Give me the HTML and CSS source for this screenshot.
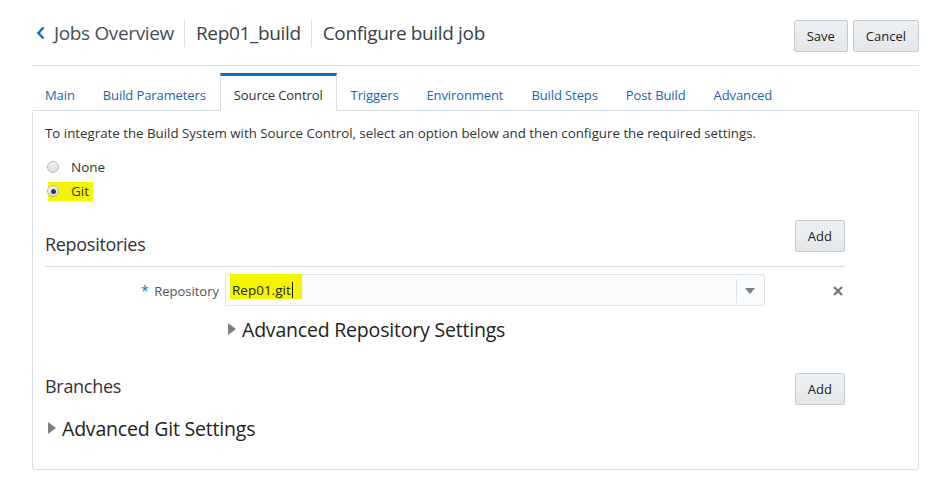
FILE: index.html
```html
<!DOCTYPE html>
<html lang="en">
<head>
<meta charset="utf-8">
<title>Configure build job</title>
<link rel="stylesheet" href="styles.css">
</head>
<body>
<div class="page">
  <header class="header">
    <nav class="crumbs">
      <a class="crumb back" href="#">
        <svg class="chev" width="10" height="14" viewBox="0 0 10 14"><path d="M7.5 1.5 L2.5 7 L7.5 12.5" fill="none" stroke="#1a6fbd" stroke-width="2.6"/></svg>
        <span>Jobs Overview</span>
      </a>
      <span class="sep"></span>
      <span class="crumb">Rep01_build</span>
      <span class="sep"></span>
      <span class="crumb current">Configure build job</span>
    </nav>
    <div class="actions">
      <button class="btn">Save</button>
      <button class="btn">Cancel</button>
    </div>
  </header>

  <ul class="tabs">
    <li class="tab">Main</li>
    <li class="tab">Build Parameters</li>
    <li class="tab active">Source Control</li>
    <li class="tab">Triggers</li>
    <li class="tab">Environment</li>
    <li class="tab">Build Steps</li>
    <li class="tab">Post Build</li>
    <li class="tab">Advanced</li>
  </ul>

  <section class="panel">
    <p class="intro">To integrate the Build System with Source Control, select an option below and then configure the required settings.</p>
    <div class="radios">
      <label class="radio-row"><span class="radio"></span><span class="radio-label">None</span></label>
      <label class="radio-row"><span class="hl hl-git"></span><span class="radio checked"></span><span class="radio-label">Git</span></label>
    </div>

    <div class="section repos">
      <div class="section-head bordered">
        <h2 class="section-title">Repositories</h2>
        <button class="btn">Add</button>
      </div>
      <div class="repo-row">
        <label class="field-label"><span class="req">*</span> Repository</label>
        <div class="select">
          <span class="hl hl-repo"></span>
          <span class="select-value">Rep01.git</span><span class="caret"></span>
          <span class="select-divider"></span>
          <svg class="select-arrow" width="10" height="6" viewBox="0 0 10 6"><path d="M0 0 H10 L5 6 Z" fill="#7a7d80"/></svg>
        </div>
        <svg class="remove" width="10" height="10" viewBox="0 0 10 10"><path d="M1 1 L9 9 M9 1 L1 9" stroke="#6f7478" stroke-width="2.2"/></svg>
      </div>
      <div class="disclosure sub">
        <svg class="tri" width="8" height="12" viewBox="0 0 8 12"><path d="M0 0 L8 6 L0 12 Z" fill="#7b7f83"/></svg>
        <span>Advanced Repository Settings</span>
      </div>
    </div>

    <div class="section branches">
      <div class="section-head">
        <h2 class="section-title">Branches</h2>
        <button class="btn">Add</button>
      </div>
      <div class="disclosure">
        <svg class="tri" width="8" height="12" viewBox="0 0 8 12"><path d="M0 0 L8 6 L0 12 Z" fill="#7b7f83"/></svg>
        <span>Advanced Git Settings</span>
      </div>
    </div>
  </section>
</div>
</body>
</html>
```

FILE: styles.css
```css
* { box-sizing: border-box; }
html, body { margin: 0; padding: 0; background: #fff; }
body {
  font-family: "Open Sans", "Noto Sans", sans-serif;
  color: #333;
  font-size: 13px;
}
.page {
  width: 887px;
  margin-left: 32px;
}
.header {
  display: flex;
  justify-content: space-between;
  align-items: flex-start;
  height: 66px;
  border-bottom: 1px solid #d9dfe4;
}
.crumbs {
  display: flex;
  align-items: center;
  height: 30px;
  margin-top: 18px;
  font-size: 19px;
  letter-spacing: -0.35px;
}
.crumb { color: #3a4249; text-decoration: none; white-space: nowrap; }
.crumb.back { display: flex; align-items: center; color: #47505a; }
.chev { margin-left: 4px; margin-right: 8px; }
.sep {
  width: 1px;
  height: 28px;
  background: #dde2e6;
  margin: 0 11px 0 10px;
}
.actions { display: flex; gap: 5px; margin-top: 20px; }
.btn {
  font-family: "Open Sans", "Noto Sans", sans-serif;
  font-size: 13px;
  color: #222;
  height: 32px;
  padding: 0 12px;
  border: 1px solid #c4ccd3;
  border-radius: 2px;
  background: linear-gradient(#eef1f3, #e3e7ea);
}
.tabs {
  list-style: none;
  margin: 7px 0 0;
  padding: 0;
  display: flex;
  height: 37px;
  position: relative;
  z-index: 1;
}
.tab {
  font-size: 13px;
  letter-spacing: -0.1px;
  color: #1a64b0;
  padding: 10px 13px 0 13px;
  border: 1px solid transparent;
  border-top-width: 3px;
  height: 38px;
  white-space: nowrap;
}
.tab:first-child { padding-left: 12px; }
.tab.active {
  color: #333;
  border-color: #d6dfe6;
  border-top-color: #0a6fc2;
  border-bottom-color: #fff;
  background: #fff;
}
.panel {
  border: 1px solid #d6dfe6;
  border-radius: 0 0 3px 3px;
  padding: 13px 12px 0;
  height: 360px;
}
.intro { margin: 0; line-height: 18px; font-size: 13.3px; }
.radios { margin-top: 13px; }
.radio-row {
  display: flex;
  align-items: center;
  height: 24px;
  position: relative;
}
.radio {
  width: 12px;
  height: 12px;
  border-radius: 50%;
  border: 1px solid #b4b8bc;
  background: linear-gradient(#f3f3f3, #dcdcdc);
  margin-left: 2px;
  position: relative;
  z-index: 1;
}
.radio.checked::after {
  content: "";
  position: absolute;
  left: 2.5px;
  top: 2.5px;
  width: 5px;
  height: 5px;
  border-radius: 50%;
  background: #3a3a3a;
}
.radio-label { margin-left: 12px; font-size: 13.5px; position: relative; z-index: 1; }
.hl { position: absolute; background: #f5f500; }
.hl-git { left: 3px; top: 3px; width: 45px; height: 19px; }
.section { width: 800px; }
.section-head {
  display: flex;
  justify-content: space-between;
  align-items: center;
  height: 32px;
}
.repos .section-head {
  margin-top: 17px;
  align-items: flex-start;
  height: 47px;
  padding-bottom: 14px;
  border-bottom: 1px solid #d9dfe4;
}
.repos .section-title { margin-top: 12px; }
.section-title { margin: 0; font-weight: normal; font-size: 18px; color: #333; letter-spacing: -0.3px; }
.repo-row {
  display: flex;
  align-items: center;
  margin-top: 7px;
  height: 32px;
}
.field-label {
  width: 174px;
  text-align: right;
  color: #555;
  font-size: 13px;
}
.req { color: #1a6fbd; font-size: 14px; margin-right: 2px; }
.select {
  margin-left: 6px;
  width: 540px;
  height: 32px;
  border: 1px solid #dde3e7;
  border-radius: 2px;
  background: #fbfcfd;
  display: flex;
  align-items: center;
  position: relative;
}
.select-value { position: relative; z-index: 1; padding-left: 6px; font-size: 13.5px; color: #222; }
.caret { width: 1px; height: 16px; background: #111; position: relative; z-index: 1; margin-left: 1px; }
.hl-repo { left: 4px; top: -1px; width: 72px; height: 25px; }
.select-divider {
  position: absolute;
  right: 27px;
  top: 4px;
  width: 1px;
  height: 24px;
  background: #dde3e7;
}
.select-arrow { position: absolute; right: 9px; top: 13px; }
.remove { margin-left: 68px; margin-top: 2px; }
.disclosure {
  display: flex;
  align-items: center;
  font-size: 19.5px;
  letter-spacing: -0.2px;
  color: #222;
  height: 28px;
}
.disclosure .tri { margin-left: 3px; margin-right: 6px; }
.disclosure.sub { margin-left: 180px; margin-top: 9px; }
.branches { margin-top: 30px; }
.branches .section-title { margin-top: -7px; }
.branches .disclosure { margin-top: 9px; }
```
